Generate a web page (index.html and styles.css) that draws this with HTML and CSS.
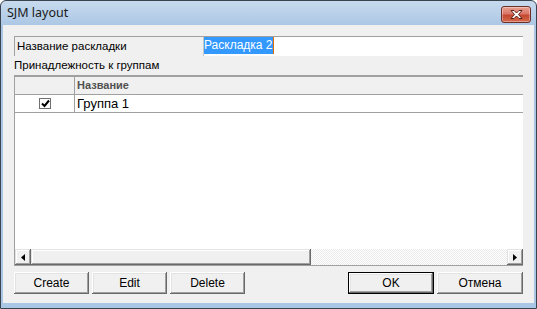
FILE: index.html
```html
<!DOCTYPE html>
<html>
<head>
<meta charset="utf-8">
<link rel="stylesheet" href="styles.css">
</head>
<body>
<div class="window">
  <div class="titlebar">
    <span class="title">SJM layout</span>
    <div class="close">
      <svg width="15" height="11" viewBox="0 0 15 11">
        <path d="M2 1.5 L5 1.5 L7.5 4 L10 1.5 L13 1.5 L9.5 5.5 L13 9.5 L10 9.5 L7.5 7 L5 9.5 L2 9.5 L5.5 5.5 Z" fill="#fff" stroke="#5a1f14" stroke-width="1" stroke-linejoin="round"/>
      </svg>
    </div>
  </div>
  <div class="client">
    <div class="name-row">
      <div class="name-label">Название раскладки</div>
      <div class="name-input"><span class="sel">Раскладка 2</span><span class="caret"></span></div>
    </div>
    <div class="group-label">Принадлежность к группам</div>
    <div class="grid">
      <div class="grid-head">
        <div class="c-fixed"></div>
        <div class="c-name head-text">Название</div>
      </div>
      <div class="grid-row">
        <div class="c-fixed">
          <span class="check">
            <svg width="9" height="9" viewBox="0 0 9 9"><path d="M1 4.5 L3.5 7 L8 1.5" fill="none" stroke="#000" stroke-width="2"/></svg>
          </span>
        </div>
        <div class="c-name">Группа 1</div>
      </div>
      <div class="grid-empty"></div>
      <div class="hscroll">
        <div class="sb-btn"><svg width="4" height="7" viewBox="0 0 4 7"><path d="M4 0 L0 3.5 L4 7 Z" fill="#000"/></svg></div>
        <div class="sb-thumb"></div>
        <div class="sb-track"></div>
        <div class="sb-btn"><svg width="4" height="7" viewBox="0 0 4 7"><path d="M0 0 L4 3.5 L0 7 Z" fill="#000"/></svg></div>
      </div>
    </div>
    <div class="buttons">
      <div class="btn-group">
        <div class="btn">Create</div>
        <div class="btn">Edit</div>
        <div class="btn">Delete</div>
      </div>
      <div class="btn-group">
        <div class="btn wide default">OK</div>
        <div class="btn wide">Отмена</div>
      </div>
    </div>
  </div>
</div>
</body>
</html>
```
FILE: styles.css
```css
* { box-sizing: border-box; }
html, body { margin: 0; padding: 0; background: #fff; }
body { font-family: "Liberation Sans", Arial, sans-serif; font-size: 11.5px; color: #000; }

.window {
  width: 537px;
  height: 309px;
  border: 1px solid #3a4450;
  border-radius: 6px 6px 0 0;
  background: linear-gradient(#c7daee 0px, #aac6e4 26px, #a9c6e5 100%);
  display: flex;
  flex-direction: column;
  padding: 0 2px 5px 2px;
  overflow: hidden;
}

.titlebar {
  height: 24px;
  flex: none;
  display: flex;
  align-items: center;
  justify-content: space-between;
  padding-left: 4px;
  padding-right: 3px;
}
.title {
  font-family: "Noto Sans", "Open Sans", sans-serif;
  font-size: 12.5px;
  color: #1a1a1a;
  margin-top: -1px;
}
.close {
  width: 30px;
  height: 17px;
  margin-top: 3px;
  border: 1px solid #6b2e28;
  border-radius: 3px;
  background: linear-gradient(#e8a18f 0%, #d9776a 45%, #c4472f 55%, #d46a4c 100%);
  box-shadow: inset 0 0 0 1px rgba(255,255,255,0.35);
  display: flex;
  align-items: center;
  justify-content: center;
}

.client {
  flex: 1;
  background: #f0f0f0;
  padding: 11px 11px 9px 11px;
  display: flex;
  flex-direction: column;
}

.name-row {
  display: flex;
  height: 20px;
  border-top: 1px solid #a0a0a0;
}
.name-label {
  width: 190px;
  border-left: 1px solid #a0a0a0;
  border-right: 1px solid #c8c8c8;
  padding-left: 2px;
  line-height: 18px;
  background: #f0f0f0;
}
.name-input {
  flex: 1;
  background: #fff;
  display: flex;
  align-items: flex-start;
}
.sel {
  background: #3399ff;
  color: #fff;
  line-height: 17px;
  font-size: 12px;
}
.caret {
  width: 1px;
  height: 17px;
  background: #e07000;
}

.group-label {
  height: 19px;
  line-height: 19px;
}

.grid {
  height: 191px;
  border-top: 2px solid #a0a0a0;
  border-left: 1px solid #a0a0a0;
  border-bottom: 1px solid #a0a0a0;
  display: flex;
  flex-direction: column;
  background: #fff;
}
.grid-head {
  display: flex;
  height: 18px;
  background: #f0f0f0;
  border-bottom: 1px solid #a0a0a0;
  flex: none;
}
.grid-row {
  display: flex;
  height: 18px;
  border-bottom: 1px solid #a0a0a0;
  flex: none;
}
.c-fixed {
  width: 60px;
  border-right: 1px solid #a0a0a0;
  display: flex;
  align-items: center;
  justify-content: center;
}
.c-name {
  flex: 1;
  padding-left: 2px;
  line-height: 17px;
  font-size: 13px;
}
.head-text {
  font-weight: bold;
  color: #505050;
  font-size: 11px;
}
.check {
  width: 12px;
  height: 11px;
  border: 1px solid #707070;
  background: #fff;
  display: flex;
  align-items: center;
  justify-content: center;
  margin-left: 1px;
}
.grid-empty { flex: 1; }

.hscroll {
  height: 16px;
  display: flex;
  flex: none;
}
.sb-btn {
  width: 16px;
  background: #f0f0f0;
  box-shadow: inset -1px -1px #696969, inset 1px 1px #e3e3e3, inset -2px -2px #a0a0a0, inset 2px 2px #fff;
  display: flex;
  align-items: center;
  justify-content: center;
}
.sb-thumb {
  width: 280px;
  background: #f0f0f0;
  box-shadow: inset -1px -1px #696969, inset 1px 1px #e3e3e3, inset -2px -2px #a0a0a0, inset 2px 2px #fff;
}
.sb-track {
  flex: 1;
  background: repeating-conic-gradient(#fff 0 25%, #ebebeb 0 50%) 0 0 / 2px 2px;
}

.buttons {
  margin-top: 6px;
  display: flex;
  justify-content: space-between;
}
.btn-group {
  display: flex;
  gap: 3px;
}
.btn {
  width: 75px;
  height: 22px;
  background: #f0f0f0;
  box-shadow: inset -1px -1px #696969, inset 1px 1px #fff, inset -2px -2px #a0a0a0, inset 2px 2px #e3e3e3;
  display: flex;
  align-items: center;
  justify-content: center;
  font-size: 12px;
}
.btn.wide { width: 86px; }
.btn.default {
  border: 1px solid #000;
}
```
